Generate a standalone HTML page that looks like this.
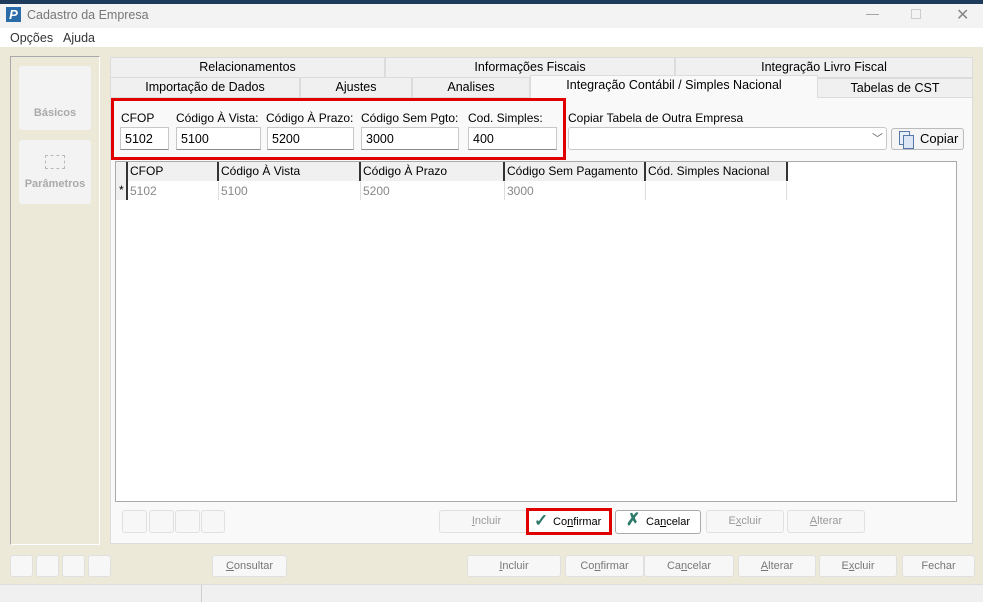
<!DOCTYPE html>
<html><head><meta charset="utf-8"><style>
*{box-sizing:border-box;margin:0;padding:0}
body{width:983px;height:602px;position:relative;overflow:hidden;font-family:"Liberation Sans",sans-serif;font-size:12px;color:#000;background:#ece9d8}
.a{position:absolute}
.tab{position:absolute;background:#f0f0f0;border:1px solid #dcdcdc;text-align:center;font-size:12.5px;line-height:19px}
.inp{position:absolute;background:#fff;border:1px solid #c8c8c8;border-bottom:1px solid #8a8a8a;font-size:12.5px;padding:4px 0 0 4px;height:23px}
.lbl{position:absolute;font-size:12px}
.btn{position:absolute;background:#f7f7f7;border:1px solid #e0e0e0;border-radius:3px;color:#9a9a9a;text-align:center;font-size:11px;line-height:20px}
.hd{position:absolute;top:0;height:19px;line-height:19px;font-size:12px;border-right:2px solid #333;padding-left:2px}
.cell{position:absolute;top:20px;height:18px;line-height:18px;font-size:12px;color:#888;border-right:1px solid #ddd;padding-left:2px}
</style></head><body>
<div class="a" style="left:0;top:0;width:983px;height:4px;background:#1f3b5c"></div>
<div class="a" style="left:0;top:4px;width:983px;height:24px;background:#f3f3f3"></div>
<div class="a" style="left:6px;top:7px;width:15px;height:15px;background:#2a6ca8;color:#fff;font-weight:bold;font-size:13px;line-height:15px;text-align:center;font-style:italic">P</div>
<div class="a" style="left:27px;top:8px;font-size:12.5px;color:#777">Cadastro da Empresa</div>
<div class="a" style="left:866px;top:6px;color:#999;font-size:13px">—</div>
<div class="a" style="left:911px;top:9px;width:10px;height:10px;border:1px solid #ccc"></div>
<div class="a" style="left:956px;top:5px;color:#888;font-size:16px">✕</div>
<div class="a" style="left:0;top:28px;width:983px;height:19px;background:#fff"></div>
<div class="a" style="left:10px;top:31px;font-size:12.5px;color:#333">Opções</div>
<div class="a" style="left:63px;top:31px;font-size:12.5px;color:#333">Ajuda</div>

<div class="a" style="left:10px;top:56px;width:90px;height:489px;border:1px solid #fff;border-top-color:#aaa;border-left-color:#aaa"></div>
<div class="a" style="left:19px;top:66px;width:72px;height:64px;background:#f3f3f3;border-radius:3px;color:#aaa;font-weight:bold;font-size:11px;text-align:center;line-height:94px">Básicos</div>
<div class="a" style="left:19px;top:140px;width:72px;height:64px;background:#f3f3f3;border-radius:3px;color:#aaa;font-weight:bold;font-size:11px;text-align:center;padding-top:38px">Parâmetros</div>
<div class="a" style="left:45px;top:155px;width:20px;height:14px;border:1px dashed #bbb"></div>

<div class="tab" style="left:110px;top:57px;width:275px;height:21px">Relacionamentos</div>
<div class="tab" style="left:385px;top:57px;width:290px;height:21px">Informações Fiscais</div>
<div class="tab" style="left:675px;top:57px;width:298px;height:21px">Integração Livro Fiscal</div>
<div class="tab" style="left:110px;top:77px;width:190px;height:21px">Importação de Dados</div>
<div class="tab" style="left:300px;top:77px;width:112px;height:21px">Ajustes</div>
<div class="tab" style="left:412px;top:77px;width:118px;height:21px">Analises</div>
<div class="tab" style="left:817px;top:78px;width:156px;height:20px">Tabelas de CST</div>
<div class="a" style="left:110px;top:97px;width:863px;height:447px;background:#f9f9f9;border:1px solid #dcdcdc"></div>
<div class="tab" style="left:530px;top:75px;width:288px;height:23px;background:#f9f9f9;border-bottom:none;line-height:19px">Integração Contábil / Simples Nacional</div>

<div class="a" style="left:111px;top:98px;width:455px;height:62px;border:3px solid #e00000"></div>
<div class="lbl" style="left:121px;top:111px">CFOP</div>
<div class="lbl" style="left:176px;top:111px">Código À Vista:</div>
<div class="lbl" style="left:266px;top:111px">Código À Prazo:</div>
<div class="lbl" style="left:361px;top:111px">Código Sem Pgto:</div>
<div class="lbl" style="left:468px;top:111px">Cod. Simples:</div>
<div class="lbl" style="left:568px;top:111px">Copiar Tabela de Outra Empresa</div>
<div class="inp" style="left:120px;top:127px;width:49px">5102</div>
<div class="inp" style="left:176px;top:127px;width:85px">5100</div>
<div class="inp" style="left:267px;top:127px;width:87px">5200</div>
<div class="inp" style="left:361px;top:127px;width:98px">3000</div>
<div class="inp" style="left:468px;top:127px;width:89px">400</div>
<div class="inp" style="left:568px;top:127px;width:319px;border-radius:3px;border-bottom-color:#c8c8c8"></div>
<div class="a" style="left:872px;top:130px;color:#666;font-size:11px">﹀</div>
<div class="a" style="left:891px;top:128px;width:73px;height:22px;background:#f5f5f5;border:1px solid #bbb;border-radius:3px;font-size:13px;line-height:20px;padding-left:28px">Copiar</div>
<div class="a" style="left:899px;top:131px;width:11px;height:14px;border:1px solid #5577aa;background:#e8eef8"></div>
<div class="a" style="left:903px;top:135px;width:11px;height:14px;border:1px solid #5577aa;background:#dde6f4"></div>

<div class="a" style="left:115px;top:161px;width:842px;height:341px;background:#fff;border:1px solid #aaa">
<div class="a" style="left:0;top:0;width:12px;height:38px;background:#f0f0f0;border-right:2px solid #333"></div>
<div class="a" style="left:3px;top:21px;font-size:12px">*</div>
<div class="hd" style="left:12px;width:91px;background:#f0f0f0">CFOP</div>
<div class="hd" style="left:103px;width:142px;background:#f0f0f0">Código À Vista</div>
<div class="hd" style="left:245px;width:144px;background:#f0f0f0">Código À Prazo</div>
<div class="hd" style="left:389px;width:141px;background:#f0f0f0">Código Sem Pagamento</div>
<div class="hd" style="left:530px;width:142px;background:#f0f0f0">Cód. Simples Nacional</div>
<div class="cell" style="left:12px;width:91px">5102</div>
<div class="cell" style="left:103px;width:142px">5100</div>
<div class="cell" style="left:245px;width:144px">5200</div>
<div class="cell" style="left:389px;width:141px">3000</div>
<div class="cell" style="left:530px;width:141px"></div>
</div>

<div class="btn" style="left:122px;top:510px;width:25px;height:23px"></div>
<div class="btn" style="left:149px;top:510px;width:25px;height:23px"></div>
<div class="btn" style="left:175px;top:510px;width:25px;height:23px"></div>
<div class="btn" style="left:201px;top:510px;width:24px;height:23px"></div>
<div class="btn" style="left:439px;top:510px;width:95px;height:23px"><u>I</u>ncluir</div>
<div class="a" style="left:526px;top:508px;width:86px;height:27px;border:3px solid #e00000;background:#fff"></div>
<div class="a" style="left:534px;top:511px;font-size:17px;color:#2d7a6a;font-weight:bold">✓</div>
<div class="a" style="left:553px;top:516px;font-size:11px">Co<u>n</u>firmar</div>
<div class="a" style="left:615px;top:510px;width:86px;height:24px;border:1px solid #aaa;border-radius:3px;background:#fff"></div>
<div class="a" style="left:626px;top:510px;font-size:17px;color:#2d7a6a;font-weight:bold">✗</div>
<div class="a" style="left:646px;top:516px;font-size:11px">Ca<u>n</u>celar</div>
<div class="btn" style="left:706px;top:510px;width:78px;height:23px">E<u>x</u>cluir</div>
<div class="btn" style="left:787px;top:510px;width:78px;height:23px"><u>A</u>lterar</div>

<div class="btn" style="left:10px;top:555px;width:23px;height:22px"></div>
<div class="btn" style="left:36px;top:555px;width:23px;height:22px"></div>
<div class="btn" style="left:62px;top:555px;width:23px;height:22px"></div>
<div class="btn" style="left:88px;top:555px;width:23px;height:22px"></div>
<div class="btn" style="left:212px;top:555px;width:75px;height:22px;color:#777"><u>C</u>onsultar</div>
<div class="btn" style="left:467px;top:555px;width:94px;height:22px;color:#777"><u>I</u>ncluir</div>
<div class="btn" style="left:565px;top:555px;width:79px;height:22px;color:#777">Co<u>n</u>firmar</div>
<div class="btn" style="left:644px;top:555px;width:90px;height:22px;color:#777">Ca<u>n</u>celar</div>
<div class="btn" style="left:738px;top:555px;width:78px;height:22px;color:#777"><u>A</u>lterar</div>
<div class="btn" style="left:819px;top:555px;width:78px;height:22px;color:#777">E<u>x</u>cluir</div>
<div class="btn" style="left:902px;top:555px;width:73px;height:22px;color:#777">Fechar</div>

<div class="a" style="left:0;top:584px;width:983px;height:18px;background:#f0f0f0;border-top:1px solid #ddd"></div>
<div class="a" style="left:201px;top:585px;width:1px;height:17px;background:#ccc"></div>
</body></html>
